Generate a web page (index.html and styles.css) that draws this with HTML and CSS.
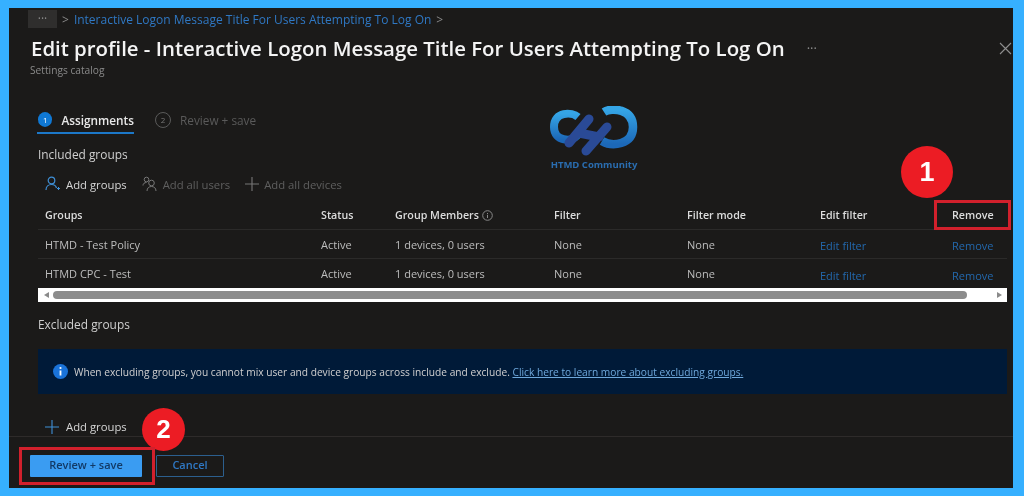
FILE: index.html
```html
<!DOCTYPE html>
<html lang="en">
<head>
    <meta charset="UTF-8">
    <meta name="viewport" content="width=device-width, initial-scale=1.0">
    <title>Edit profile</title>
    <link rel="stylesheet" href="styles.css">
</head>
<body>
    <div class="blade">
        <div class="breadcrumb">
            <span class="crumb-more">&middot;&middot;&middot;</span>
            <span class="crumb-sep">&gt;</span>
            <a class="crumb-link">Interactive Logon Message Title For Users Attempting To Log On</a>
            <span class="crumb-sep">&gt;</span>
        </div>

        <div class="title-row">
            <h1>Edit profile - Interactive Logon Message Title For Users Attempting To Log On</h1>
            <span class="title-more">&middot;&middot;&middot;</span>
            <svg class="close" width="13" height="13" viewBox="0 0 13 13"><path d="M1 1l11 11M12 1L1 12" stroke="#8f8f8f" stroke-width="1.1" fill="none"/></svg>
        </div>
        <div class="subtitle">Settings catalog</div>

        <div class="steps">
            <div class="step step-active">
                <span class="step-num">1</span>
                <span>Assignments</span>
            </div>
            <div class="step step-off">
                <span class="step-num">2</span>
                <span>Review + save</span>
            </div>
        </div>

        <div class="content">
            <h2 class="included">Included groups</h2>
            <div class="toolbar">
                <span class="tool">
                    <svg width="16" height="16" viewBox="0 0 16 16"><circle cx="6.5" cy="4.5" r="3.3" stroke="#3f8fd6" stroke-width="1.2" fill="none"/><path d="M1 14c0-3.5 2.5-5.5 5.5-5.5s4.5 1.5 5 3.5" stroke="#3f8fd6" stroke-width="1.2" fill="none"/><path d="M12 12.5h3M13.5 11v3" stroke="#3f8fd6" stroke-width="1"/></svg>
                    Add groups
                </span>
                <span class="tool tool-off">
                    <svg width="16" height="16" viewBox="0 0 16 16"><circle cx="4.5" cy="3.5" r="2.3" stroke="#777" fill="none"/><circle cx="9.5" cy="7" r="2.8" stroke="#777" fill="none"/><path d="M1 9.5c0-2 1.500-3 3.500-3M5 15c0-3 2-4.500 4.500-4.500S14 12 14 15" stroke="#777" fill="none"/></svg>
                    Add all users
                </span>
                <span class="tool tool-off">
                    <svg width="14" height="14" viewBox="0 0 14 14"><path d="M7 0v14M0 7h14" stroke="#777" stroke-width="1.100"/></svg>
                    Add all devices
                </span>
            </div>

            <div class="grid-row grid-head">
                <span>Groups</span>
                <span>Status</span>
                <span class="members">Group Members
                    <svg width="11" height="11" viewBox="0 0 11 11"><circle cx="5.500" cy="5.500" r="4.800" stroke="#888" fill="none"/><path d="M5.500 4.800v3.200M5.500 3v1" stroke="#888"/></svg>
                </span>
                <span>Filter</span>
                <span>Filter mode</span>
                <span>Edit filter</span>
                <span>Remove</span>
            </div>
            <div class="grid-row">
                <span>HTMD - Test Policy</span>
                <span>Active</span>
                <span>1 devices, 0 users</span>
                <span>None</span>
                <span>None</span>
                <a class="row-link">Edit filter</a>
                <a class="row-link">Remove</a>
            </div>
            <div class="grid-row no-line">
                <span>HTMD CPC - Test</span>
                <span>Active</span>
                <span>1 devices, 0 users</span>
                <span>None</span>
                <span>None</span>
                <a class="row-link">Edit filter</a>
                <a class="row-link">Remove</a>
            </div>
            <div class="scrollbar">
                <span class="arrow arrow-left"></span>
                <span class="thumb"></span>
                <span class="arrow arrow-right"></span>
            </div>

            <h2 class="excluded">Excluded groups</h2>
            <div class="info-box">
                <svg width="15" height="15" viewBox="0 0 15 15"><circle cx="7.500" cy="7.500" r="7.500" fill="#1a73d9"/><path d="M7.500 6.500v5" stroke="#fff" stroke-width="1.800"/><circle cx="7.500" cy="4" r="1.100" fill="#fff"/></svg>
                <span>When excluding groups, you cannot mix user and device groups across include and exclude. <a class="info-link">Click here to learn more about excluding groups.</a></span>
            </div>
            <div class="add-row">
                <svg width="14" height="14" viewBox="0 0 14 14"><path d="M7 0v14M0 7h14" stroke="#3f8fd6" stroke-width="1.100"/></svg>
                Add groups
            </div>
        </div>

        <div class="footer">
            <button class="btn-primary">Review + save</button>
            <button class="btn-cancel">Cancel</button>
        </div>

        <div class="logo">
            <svg width="88" height="50" viewBox="0 0 88 50">
                <defs>
                    <linearGradient id="ringBlue" x1="0" y1="0" x2="0" y2="1">
                        <stop offset="0" stop-color="#35a5e6"/>
                        <stop offset="1" stop-color="#1c68b8"/>
                    </linearGradient>
                </defs>
                <path d="M28 11C22 6 4 5 4 21c0 15 18 15 24 8" stroke="url(#ringBlue)" stroke-width="8" fill="none"/>
                <path d="M54 6c8-5 29-3 29 15 0 18-21 20-31 14" stroke="url(#ringBlue)" stroke-width="8.500" fill="none"/>
                <path d="M19 37L39 13M36 45L57 21M29 27l20 4" stroke="#2a4a96" stroke-width="9" stroke-linecap="round" fill="none"/>
            </svg>
            <span class="logo-text">HTMD Community</span>
        </div>

        <span class="callout callout-one">1</span>
        <span class="callout callout-two">2</span>
        <span class="highlight highlight-remove"></span>
        <span class="highlight highlight-save"></span>
    </div>
</body>
</html>
```

FILE: styles.css
```css
body {
    margin: 0;
    background-color: #36b0ff;
    font-family: "Open Sans", "Noto Sans", Arial, sans-serif;
    overflow: hidden;
}

.blade {
    position: relative;
    box-sizing: border-box;
    width: 1004px;
    height: 480px;
    margin: 8px 0 0 9px;
    background-color: #1b1a19;
    color: #d6d6d6;
    font-size: 11px;
    filter: blur(0.45px);
}

.breadcrumb {
    display: flex;
    align-items: center;
    gap: 5px;
    height: 18px;
    padding: 2px 0 0 19px;
    font-size: 12px;
}

.crumb-more {
    width: 29px;
    height: 18px;
    background-color: #2f2e2d;
    color: #8a8a8a;
    line-height: 18px;
    text-align: center;
}

.crumb-sep {
    color: #8a8a8a;
}

.crumb-link {
    color: #2f78c4;
}

.title-row {
    display: flex;
    align-items: center;
    height: 24px;
    margin-top: 8px;
    padding-left: 22px;
}

h1 {
    margin: 0;
    color: #f4f4f4;
    font-size: 20.400px;
    font-weight: 600;
    white-space: nowrap;
}

.title-more {
    margin-left: 22px;
    color: #8a8a8a;
    font-size: 13px;
}

.close {
    margin-left: auto;
    margin-right: 1px;
}

.subtitle {
    height: 14px;
    margin-top: 3px;
    padding-left: 21px;
    color: #8a8a8a;
    font-size: 10.200px;
    line-height: 14px;
}

.steps {
    display: flex;
    gap: 21px;
    height: 27px;
    margin: 30px 0 0 28px;
}

.step {
    display: flex;
    align-items: center;
    gap: 9px;
    height: 25px;
    font-size: 11.800px;
}

.step-active {
    width: 97px;
    border-bottom: 2px solid #1c78c8;
    color: #e8e8e8;
    font-weight: 600;
}

.step-off {
    color: #5a5a5a;
}

.step-num {
    display: flex;
    align-items: center;
    justify-content: center;
    box-sizing: border-box;
    width: 15px;
    height: 15px;
    margin-left: 1px;
    border-radius: 50%;
    background-color: #0f78d4;
    color: #fff;
    font-size: 8px;
    font-weight: 400;
}

.step-off .step-num {
    width: 16px;
    height: 16px;
    margin-left: 0;
    border: 1px solid #5a5a5a;
    background: none;
    color: #777;
}

.content {
    padding: 0 6px 0 29px;
}

h2 {
    margin: 0;
    color: #cfcfcf;
    font-size: 11.900px;
    font-weight: 400;
}

.included {
    height: 20px;
    margin-top: 10px;
    line-height: 20px;
}

.toolbar {
    display: flex;
    gap: 15px;
    height: 24px;
    margin-top: 8px;
    padding-left: 7px;
    align-items: center;
}

.tool {
    display: flex;
    align-items: center;
    gap: 5px;
    color: #d6d6d6;
    font-size: 11.300px;
}

.tool-off {
    color: #5f5f5f;
}

.grid-row {
    display: grid;
    grid-template-columns: 276px 74px 159px 133px 133px 132px 1fr;
    align-items: center;
    box-sizing: border-box;
    height: 29px;
    padding-left: 7px;
    border-bottom: 1px solid #2b2a29;
    font-size: 11px;
    color: #bdbdbd;
}

.grid-head {
    margin-top: 5px;
    color: #dcdcdc;
    font-size: 10.700px;
    font-weight: 600;
}

.no-line {
    border-bottom: none;
}

.members {
    display: flex;
    align-items: center;
    gap: 3px;
}

.row-link {
    margin-top: 3px;
    color: #2368ad;
}

.scrollbar {
    display: flex;
    align-items: center;
    gap: 4px;
    box-sizing: border-box;
    height: 14px;
    padding: 0 5px 0 6px;
    background-color: #fff;
}

.arrow {
    width: 0;
    height: 0;
    border-top: 3.500px solid transparent;
    border-bottom: 3.500px solid transparent;
}

.arrow-left {
    border-right: 5px solid #8a8a8a;
}

.arrow-right {
    margin-left: 26px;
    border-left: 5px solid #8a8a8a;
}

.thumb {
    flex: 1;
    height: 8px;
    border-radius: 4px;
    background-color: #8c8c8c;
}

.excluded {
    height: 20px;
    margin-top: 12px;
    line-height: 20px;
}

.info-box {
    display: flex;
    align-items: center;
    gap: 6px;
    height: 45px;
    margin-top: 15px;
    padding-left: 15px;
    background-color: #001a38;
    color: #d0d0d0;
    font-size: 10.200px;
}

.info-link {
    color: #6ea8dc;
    text-decoration: underline;
}

.add-row {
    display: flex;
    align-items: center;
    gap: 7px;
    height: 19px;
    margin-top: 23px;
    padding-left: 7px;
    color: #d6d6d6;
    font-size: 11.300px;
}

.footer {
    display: flex;
    gap: 14px;
    padding: 18px 0 0 21px;
    border-top: 1px solid #2e2b2a;
}

button {
    height: 22px;
    padding: 0 0 3px;
    font-family: inherit;
    font-size: 11px;
    font-weight: 600;
    border-radius: 1px;
}

.btn-primary {
    width: 112px;
    border: none;
    background-color: #3a9cf2;
    color: #123a66;
}

.btn-cancel {
    width: 68px;
    border: 1px solid #2c5f8e;
    background: none;
    color: #2f78c4;
}

.logo {
    position: absolute;
    left: 541px;
    top: 98px;
    display: flex;
    flex-direction: column;
    align-items: center;
    width: 88px;
}

.logo-text {
    margin-top: 2px;
    color: #2a6db0;
    font-size: 9.500px;
    font-weight: 700;
    white-space: nowrap;
}

.callout {
    position: absolute;
    display: flex;
    align-items: center;
    justify-content: center;
    border-radius: 50%;
    background-color: #ec1c24;
    color: #fff;
    font-family: "Liberation Sans", Arial, sans-serif;
    font-weight: 700;
}

.callout-one {
    left: 892px;
    top: 138px;
    width: 52px;
    height: 52px;
    font-size: 27px;
}

.callout-two {
    left: 133px;
    top: 400px;
    width: 43px;
    height: 43px;
    font-size: 26px;
}

.highlight {
    position: absolute;
    box-sizing: border-box;
    border: 3px solid #d2202c;
}

.highlight-remove {
    left: 925px;
    top: 192px;
    width: 77px;
    height: 30px;
}

.highlight-save {
    left: 10px;
    top: 439px;
    width: 136px;
    height: 38px;
}
```
